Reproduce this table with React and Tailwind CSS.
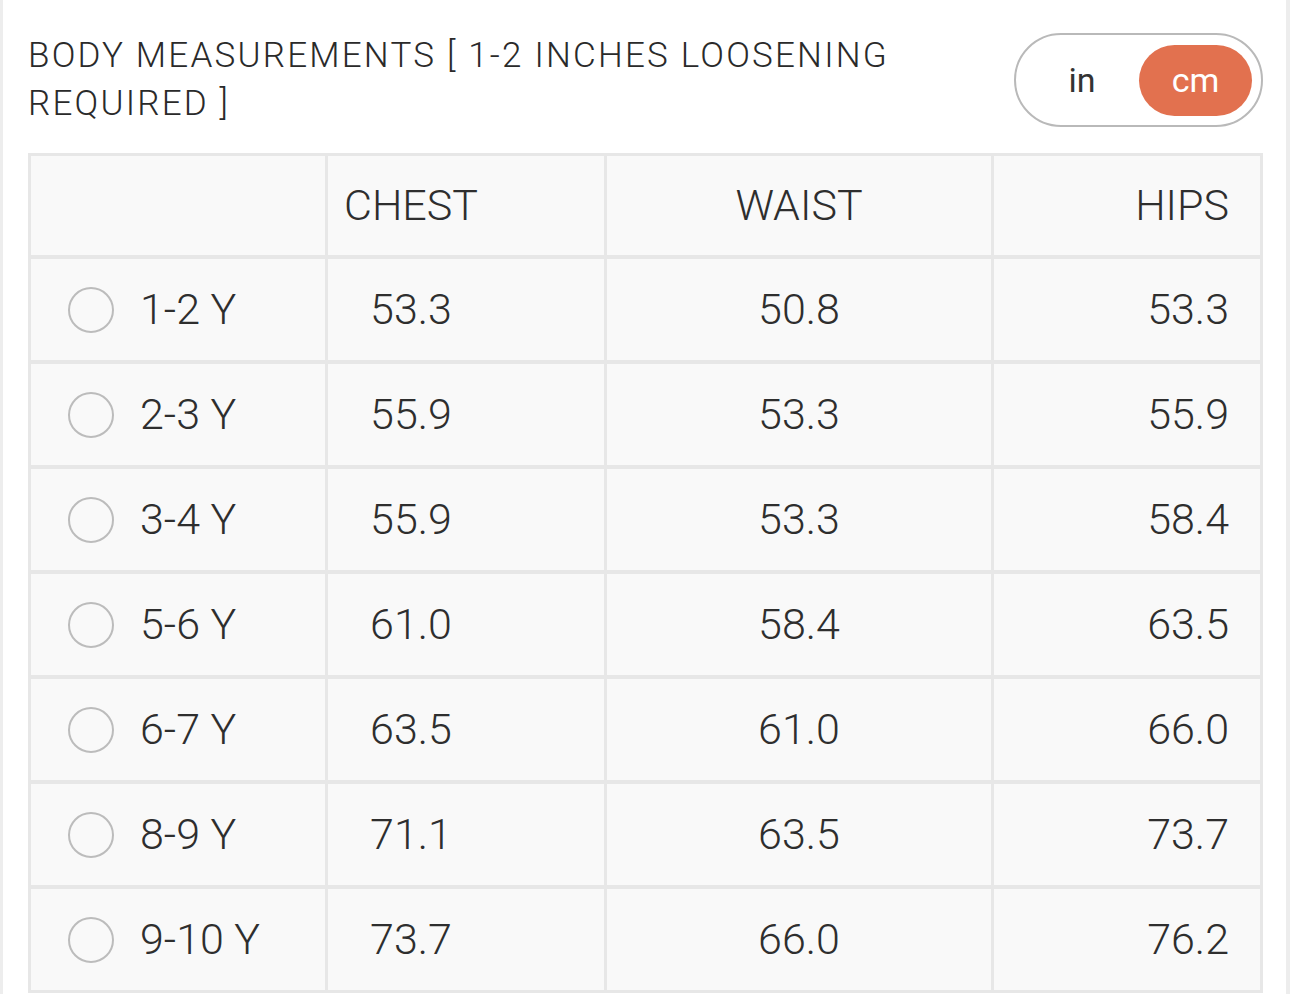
import { useState } from 'react';

const rows = [
  { size: '1-2 Y', chest: '53.3', waist: '50.8', hips: '53.3' },
  { size: '2-3 Y', chest: '55.9', waist: '53.3', hips: '55.9' },
  { size: '3-4 Y', chest: '55.9', waist: '53.3', hips: '58.4' },
  { size: '5-6 Y', chest: '61.0', waist: '58.4', hips: '63.5' },
  { size: '6-7 Y', chest: '63.5', waist: '61.0', hips: '66.0' },
  { size: '8-9 Y', chest: '71.1', waist: '63.5', hips: '73.7' },
  { size: '9-10 Y', chest: '73.7', waist: '66.0', hips: '76.2' },
];

export default function App() {
  const [unit, setUnit] = useState('cm');
  const [selected, setSelected] = useState(null);

  return (
    <div className="flex min-h-[994px] bg-white text-[#333] font-['Roboto','Liberation_Sans',sans-serif]">
      <div className="w-[3px] shrink-0 bg-[#ededed]" />

      <div className="flex-1 pl-[25px] pr-[23px] pt-[32px]">
        {/* Title + unit toggle */}
        <div className="flex items-start justify-between">
          <h2 className="w-[900px] text-[35px] leading-[48px] font-light text-[#2a2a2a] uppercase tracking-[2.2px]">
            BODY MEASUREMENTS [ 1-2 INCHES LOOSENING REQUIRED ]
          </h2>
          <div className="mt-px flex h-[94px] w-[249px] items-center rounded-full border-[2.5px] border-[#b9b9b9] p-[9px]">
            <button
              onClick={() => setUnit('in')}
              className={`flex h-[71px] flex-1 items-center justify-center rounded-full text-[34px] ${unit === 'in' ? 'bg-[#e2714f] text-white' : 'text-[#333]'}`}
            >
              in
            </button>
            <button
              onClick={() => setUnit('cm')}
              className={`flex h-[71px] w-[113px] items-center justify-center rounded-full text-[34px] ${unit === 'cm' ? 'bg-[#e2714f] text-white' : 'text-[#333]'}`}
            >
              cm
            </button>
          </div>
        </div>

        {/* Size table */}
        <div className="mt-[25px] grid grid-cols-[294px_276px_384px_266px] gap-x-[3px] gap-y-[4px] bg-[#e7e7e7] p-[3px] text-[43px] font-light text-[#2e2e2e]">
          <div className="h-[99px] bg-[#f9f9f9]" />
          <div className="flex h-[99px] items-center justify-center bg-[#f9f9f9] pr-[110px]">CHEST</div>
          <div className="flex h-[99px] items-center justify-center bg-[#f9f9f9]">WAIST</div>
          <div className="flex h-[99px] items-center justify-end bg-[#f9f9f9] pr-[31px]">HIPS</div>

          {rows.map((r) => (
            <div key={r.size} className="contents">
              <div
                onClick={() => setSelected(r.size)}
                className="flex h-[101px] cursor-pointer items-center gap-[26px] bg-[#f9f9f9] pl-[37px]"
              >
                <span className="flex h-[46px] w-[46px] items-center justify-center rounded-full border-[2.5px] border-[#bcbcbc]">
                  {selected === r.size && <span className="h-[24px] w-[24px] rounded-full bg-[#e2714f]" />}
                </span>
                <span>{r.size}</span>
              </div>
              <div className="flex h-[101px] items-center justify-center bg-[#f9f9f9] pr-[110px]">{r.chest}</div>
              <div className="flex h-[101px] items-center justify-center bg-[#f9f9f9]">{r.waist}</div>
              <div className="flex h-[101px] items-center justify-end bg-[#f9f9f9] pr-[31px]">{r.hips}</div>
            </div>
          ))}
        </div>
      </div>

      <div className="w-[5px] shrink-0 bg-[#ededed]" />
    </div>
  );
}
